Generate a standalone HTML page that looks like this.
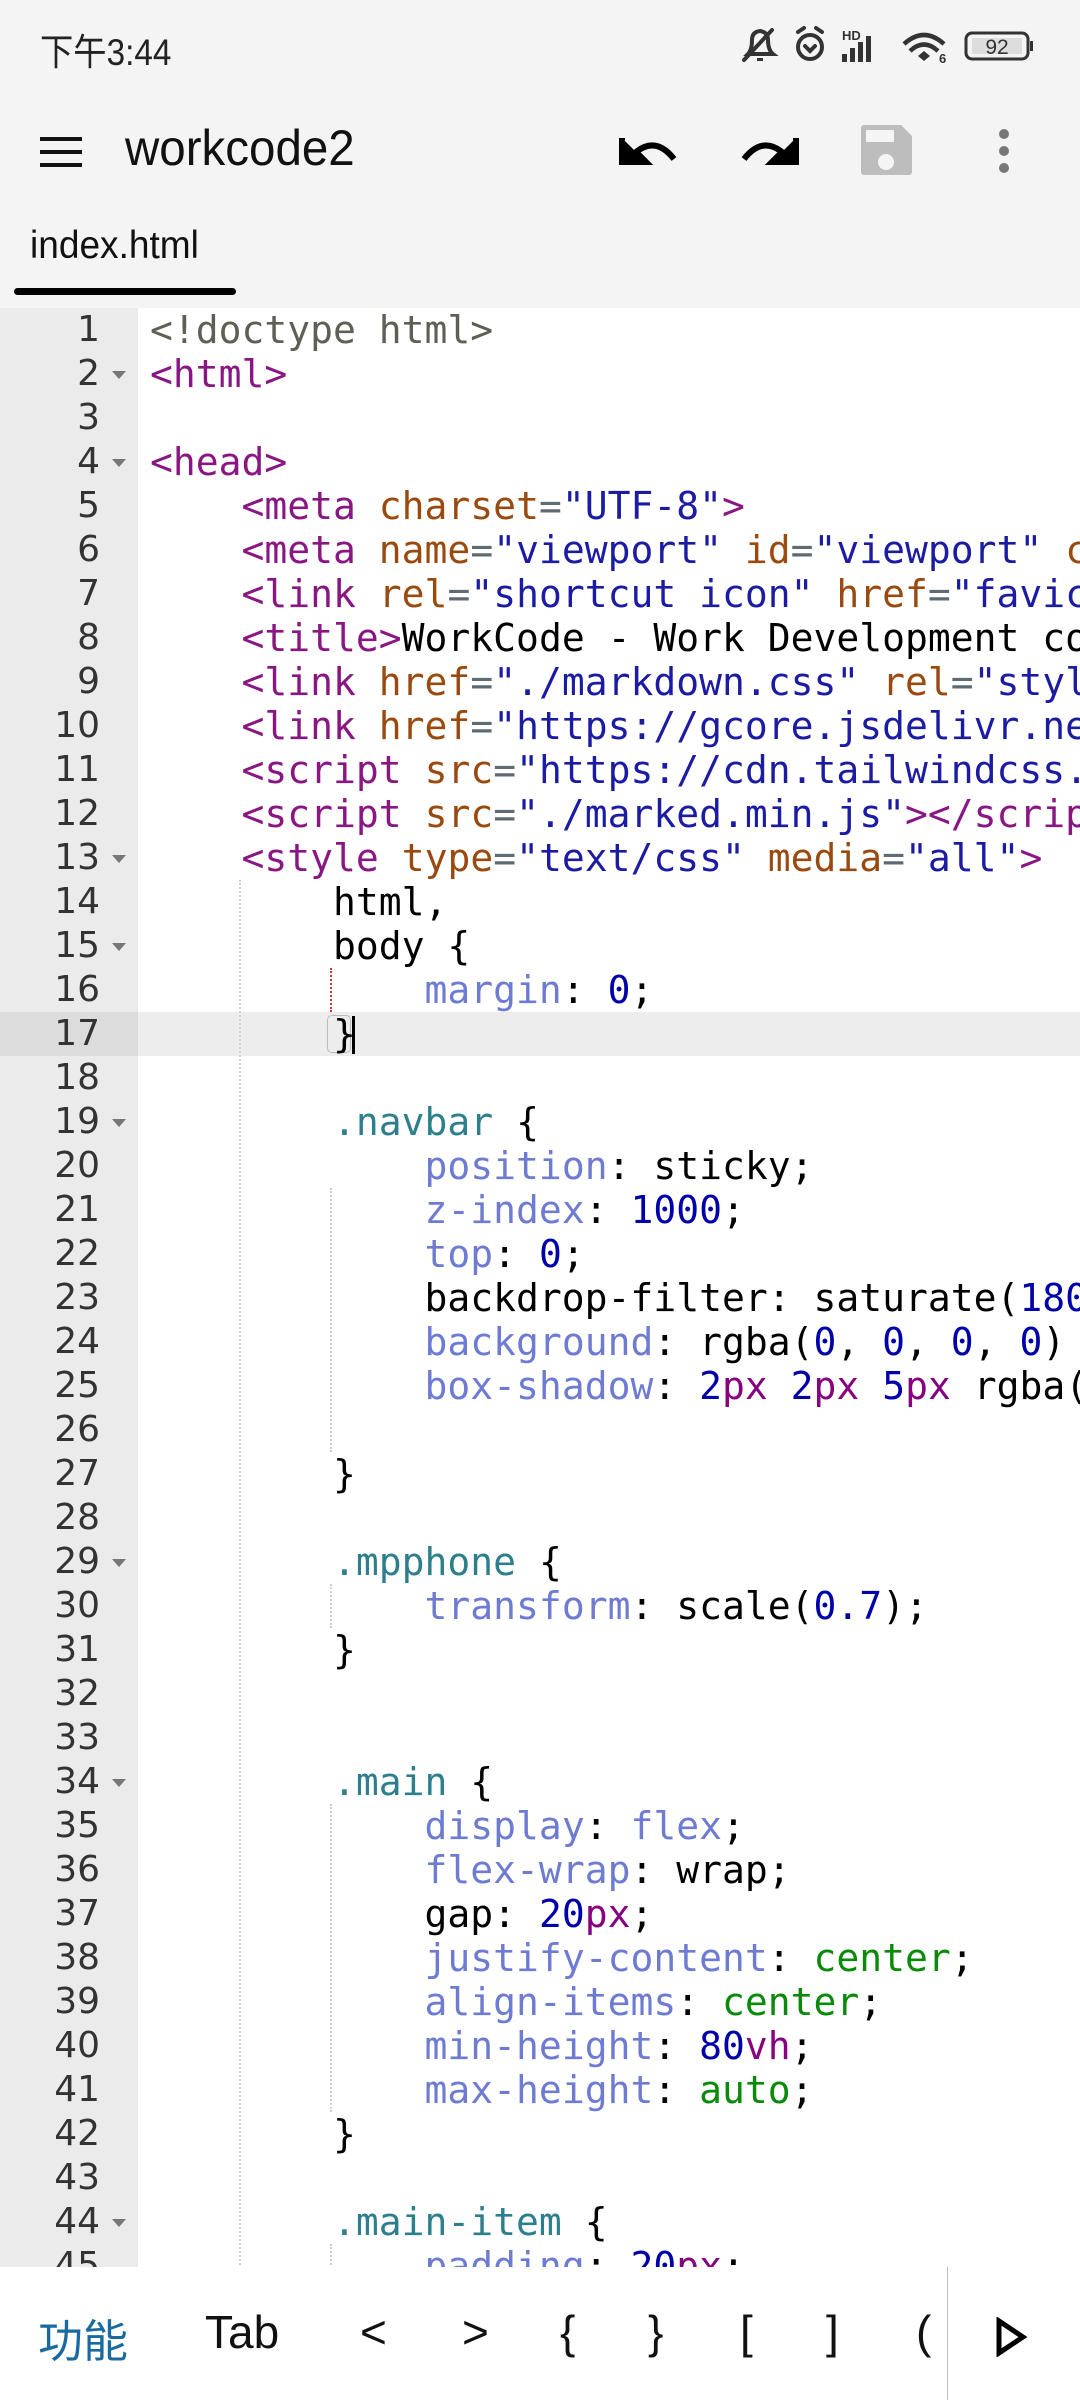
<!DOCTYPE html>
<html><head><meta charset="utf-8">
<style>
*{margin:0;padding:0;box-sizing:border-box}
body{width:1080px;height:2400px;overflow:hidden;background:#f4f4f4;position:relative;font-family:"Liberation Sans","Noto Sans CJK SC",sans-serif}
.abs{position:absolute}
#editor{position:absolute;left:0;top:308px;width:1080px;height:1959px;background:#fff;overflow:hidden}
#gutter{position:absolute;left:0;top:0;width:138px;height:100%;background:#ebebeb}
.ln{position:absolute;left:0;width:100px;text-align:right;font-family:"DejaVu Sans",sans-serif;font-size:36px;color:#333;height:44px;line-height:44px}
.fold{position:absolute;left:112px;width:0;height:0;border-left:7px solid transparent;border-right:7px solid transparent;border-top:8px solid #777}
.cl{position:absolute;left:150px;white-space:pre;font-family:"DejaVu Sans Mono",monospace;font-size:38px;height:44px;line-height:44px;color:#000}
.t{color:#8a1684}.a{color:#9a4a0e}.s{color:#1b1ba3}.e{color:#5f6b73}.d{color:#5d6055}
.c{color:#2e7f8d}.p{color:#6e7bd3}.n{color:#0000aa}.u{color:#860080}.k{color:#0a8a0a}
.g{position:absolute;width:0;border-left:2px dotted #d0d0d0}
.bb{position:absolute;top:38px;font-size:46px}
</style></head><body>
<!-- status bar -->
<div class="abs" style="left:40px;top:22px;font-size:37px;color:#222;transform:scaleX(0.9);transform-origin:left">下午3:44</div>
<svg class="abs" style="left:740px;top:24px" width="300" height="44" viewBox="0 0 300 40">
 <g fill="none" stroke="#333" stroke-width="4" stroke-linecap="round">
  <path d="M8 28 Q12 24 12 14 Q12 6 20 5 Q28 6 28 14 Q28 24 33 28 Z"/>
  <path d="M4 34 L32 4"/>
  <circle cx="70" cy="21" r="12"/>
  <path d="M58 6 L64 2 M82 6 L76 2 M65 20 L70 25 L75 20"/>
 </g>
 <path d="M17 32 h6 v3 h-6z" fill="#333"/>
 <text x="102" y="14" font-size="13" font-weight="bold" fill="#333" font-family="Liberation Sans">HD</text>
 <g fill="#333"><rect x="102" y="28" width="5" height="8"/><rect x="110" y="22" width="5" height="14"/><rect x="118" y="16" width="5" height="20"/><rect x="126" y="10" width="5" height="26"/></g>
 <g fill="none" stroke="#333" stroke-width="4.5"><path d="M164 18 Q184 0 204 18"/><path d="M170 25 Q184 12 198 25"/></g>
 <path d="M178 30 L184 25 L190 30 L184 35Z" fill="#333"/>
 <text x="199" y="37" font-size="13" font-weight="bold" fill="#333" font-family="Liberation Sans">6</text>
 <rect x="226" y="7" width="62" height="26" rx="6" fill="none" stroke="#333" stroke-width="3"/>
 <rect x="232" y="12" width="50" height="16" fill="#ddd"/>
 <rect x="290" y="15" width="3" height="10" fill="#333"/>
 <text x="257" y="28" font-size="21" fill="#333" text-anchor="middle" font-family="Liberation Sans">92</text>
</svg>
<!-- app bar -->
<div class="abs" style="left:40px;top:137px;width:42px;height:4px;background:#111"></div>
<div class="abs" style="left:40px;top:150px;width:42px;height:4px;background:#111"></div>
<div class="abs" style="left:40px;top:163px;width:42px;height:4px;background:#111"></div>
<div class="abs" style="left:125px;top:119px;font-size:50px;color:#111;transform:scaleX(0.95);transform-origin:left">workcode2</div>
<svg class="abs" style="left:600px;top:110px" width="440" height="90" viewBox="0 0 440 90">
 <path d="M22 28 L22 52 L46 52 L36 42 Q56 26 74 49" fill="none" stroke="#000" stroke-width="6"/>
 <path d="M22 28 L22 52 L46 52Z" fill="#000"/>
 <path d="M196 28 L196 52 L172 52Z" fill="#000"/>
 <path d="M196 28 L196 52 L172 52 L182 42 Q162 26 144 49" fill="none" stroke="#000" stroke-width="6"/>
 <path d="M264 15 h37 l11 11 v36 a3 3 0 0 1 -3 3 h-45 a3 3 0 0 1 -3 -3 v-44 a3 3 0 0 1 3 -3z" fill="#bdbdbd"/>
 <rect x="266" y="20" width="28" height="12" fill="#f4f4f4"/>
 <circle cx="286" cy="52" r="8" fill="#f4f4f4"/>
 <circle cx="404" cy="24" r="5" fill="#777"/><circle cx="404" cy="41" r="5" fill="#777"/><circle cx="404" cy="58" r="5" fill="#777"/>
</svg>
<!-- tab -->
<div class="abs" style="left:30px;top:224px;font-size:39px;color:#111;transform:scaleX(0.95);transform-origin:left">index.html</div>
<div class="abs" style="left:14px;top:288px;width:222px;height:7px;border-radius:4px;background:#000"></div>
<!-- editor -->
<div id="editor">
 <div id="gutter"></div>
 <div class="abs" style="left:0;top:704px;width:138px;height:44px;background:#dcdcdc"></div>
 <div class="abs" style="left:138px;top:704px;width:942px;height:44px;background:#ededed"></div>
 <div class="g" style="left:239px;top:572px;height:1400px"></div>
 <div class="g" style="left:330px;top:660px;height:44px;border-left-color:#d33"></div>
 <div class="g" style="left:330px;top:880px;height:264px"></div>
 <div class="g" style="left:330px;top:1276px;height:44px"></div>
 <div class="g" style="left:330px;top:1496px;height:308px"></div>
 <div class="g" style="left:330px;top:1936px;height:44px"></div>
 <div class="abs" style="left:327px;top:707px;width:24px;height:38px;border:1.5px solid #bbb;border-radius:5px"></div>
 <div class="abs" style="left:352px;top:708px;width:3px;height:38px;background:#000"></div>
 <div id="lines"></div>
</div>
<!-- bottom bar -->
<div class="abs" style="left:0;top:2267px;width:1080px;height:133px;background:#fff;color:#111">
 <div class="bb" style="left:38px;color:#1a6aa0;font-size:45px">功能</div>
 <div class="bb" style="left:205px">Tab</div>
 <div class="bb" style="left:360px">&lt;</div>
 <div class="bb" style="left:462px">&gt;</div>
 <div class="bb" style="left:560px">{</div>
 <div class="bb" style="left:648px">}</div>
 <div class="bb" style="left:740px">[</div>
 <div class="bb" style="left:826px">]</div>
 <div class="bb" style="left:916px">(</div>
 <div class="abs" style="left:947px;top:0;width:1px;height:133px;background:#bbb"></div>
 <svg class="abs" style="left:995px;top:50px" width="34" height="40" viewBox="0 0 34 40"><path d="M4 4 L28 20 L4 36Z" fill="none" stroke="#000" stroke-width="5"/></svg>
</div>
<script>
var L=[
'<span class="d">&lt;!doctype html&gt;</span>',
'<span class="t">&lt;html&gt;</span>',
'',
'<span class="t">&lt;head&gt;</span>',
'    <span class="t">&lt;meta</span> <span class="a">charset</span><span class="e">=</span><span class="s">"UTF-8"</span><span class="t">&gt;</span>',
'    <span class="t">&lt;meta</span> <span class="a">name</span><span class="e">=</span><span class="s">"viewport"</span> <span class="a">id</span><span class="e">=</span><span class="s">"viewport"</span> <span class="a">content</span>',
'    <span class="t">&lt;link</span> <span class="a">rel</span><span class="e">=</span><span class="s">"shortcut icon"</span> <span class="a">href</span><span class="e">=</span><span class="s">"favicon</span>',
'    <span class="t">&lt;title&gt;</span>WorkCode - Work Development code',
'    <span class="t">&lt;link</span> <span class="a">href</span><span class="e">=</span><span class="s">"./markdown.css"</span> <span class="a">rel</span><span class="e">=</span><span class="s">"style</span>',
'    <span class="t">&lt;link</span> <span class="a">href</span><span class="e">=</span><span class="s">"https://gcore.jsdelivr.net</span>',
'    <span class="t">&lt;script</span> <span class="a">src</span><span class="e">=</span><span class="s">"https://cdn.tailwindcss.com</span>',
'    <span class="t">&lt;script</span> <span class="a">src</span><span class="e">=</span><span class="s">"./marked.min.js"</span><span class="t">&gt;&lt;/script&gt;</span>',
'    <span class="t">&lt;style</span> <span class="a">type</span><span class="e">=</span><span class="s">"text/css"</span> <span class="a">media</span><span class="e">=</span><span class="s">"all"</span><span class="t">&gt;</span>',
'        html,',
'        body {',
'            <span class="p">margin</span>: <span class="n">0</span>;',
'        }',
'',
'        <span class="c">.navbar</span> {',
'            <span class="p">position</span>: sticky;',
'            <span class="p">z-index</span>: <span class="n">1000</span>;',
'            <span class="p">top</span>: <span class="n">0</span>;',
'            backdrop-filter: saturate(<span class="n">180</span>',
'            <span class="p">background</span>: rgba(<span class="n">0</span>, <span class="n">0</span>, <span class="n">0</span>, <span class="n">0</span>)',
'            <span class="p">box-shadow</span>: <span class="n">2</span><span class="u">px</span> <span class="n">2</span><span class="u">px</span> <span class="n">5</span><span class="u">px</span> rgba(',
'',
'        }',
'',
'        <span class="c">.mpphone</span> {',
'            <span class="p">transform</span>: scale(<span class="n">0.7</span>);',
'        }',
'','',
'        <span class="c">.main</span> {',
'            <span class="p">display</span>: <span class="p">flex</span>;',
'            <span class="p">flex-wrap</span>: wrap;',
'            gap: <span class="n">20</span><span class="u">px</span>;',
'            <span class="p">justify-content</span>: <span class="k">center</span>;',
'            <span class="p">align-items</span>: <span class="k">center</span>;',
'            <span class="p">min-height</span>: <span class="n">80</span><span class="u">vh</span>;',
'            <span class="p">max-height</span>: <span class="k">auto</span>;',
'        }',
'',
'        <span class="c">.main-item</span> {',
'            <span class="p">padding</span>: <span class="n">20</span><span class="u">px</span>;'
];
var folds=[2,4,13,15,19,29,34,44];
var h='';
for(var i=0;i<L.length;i++){var y=i*44;
h+='<div class="ln" style="top:'+y+'px">'+(i+1)+'</div>';
if(folds.indexOf(i+1)>=0)h+='<div class="fold" style="top:'+(y+19)+'px"></div>';
h+='<div class="cl" style="top:'+y+'px">'+L[i]+'</div>';}
document.getElementById('lines').innerHTML=h;
</script>
</body></html>
